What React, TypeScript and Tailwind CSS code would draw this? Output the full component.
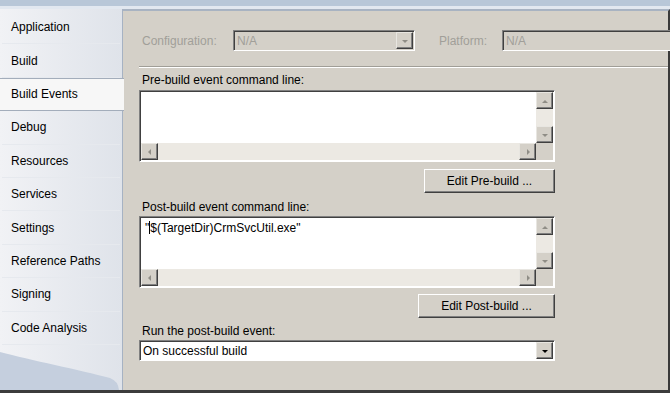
const tabs = [
  "Application",
  "Build",
  "Build Events",
  "Debug",
  "Resources",
  "Services",
  "Settings",
  "Reference Paths",
  "Signing",
  "Code Analysis",
]

function Arrow({ dir, disabled }: { dir: "up" | "down" | "left" | "right"; disabled?: boolean }) {
  const pts = {
    up: "1,6 4,3 7,6",
    down: "1,3 4,6 7,3",
    left: "5,1 2,4 5,7",
    right: "3,1 6,4 3,7",
  }[dir]
  return (
    <svg width="8" height="8" viewBox="0 0 8 8">
      <polygon points={pts} fill={disabled ? "#8f8d86" : "#000"} />
    </svg>
  )
}

function RaisedBtn({ dir, disabled, className = "" }: { dir: "up" | "down" | "left" | "right"; disabled?: boolean; className?: string }) {
  return (
    <div
      className={`flex items-center justify-center bg-[#d4d0c8] border border-t-[#e8e6e1] border-l-[#e8e6e1] border-b-[#404040] border-r-[#404040] shadow-[inset_-1px_-1px_0_#808080] ${className}`}
    >
      <Arrow dir={dir} disabled={disabled} />
    </div>
  )
}

function Sunken({ className = "", children }: { className?: string; children?: React.ReactNode }) {
  return (
    <div
      className={`border border-t-[#808080] border-l-[#808080] border-b-white border-r-white shadow-[inset_1px_1px_0_#404040] ${className}`}
    >
      {children}
    </div>
  )
}

function ScrollBox({ text }: { text?: React.ReactNode }) {
  return (
    <Sunken className="w-[416px] h-[72px] bg-white p-[1px]">
      <div className="grid h-full grid-cols-[1fr_17px] grid-rows-[1fr_17px]">
        <div className="px-[4px] pt-[3px] text-[12px] leading-[14px] text-black">{text}</div>
        <div className="flex flex-col bg-[#ece9e3]">
          <RaisedBtn dir="up" disabled className="h-[17px]" />
          <div className="flex-1" />
          <RaisedBtn dir="down" disabled className="h-[17px]" />
        </div>
        <div className="flex bg-[#ece9e3]">
          <RaisedBtn dir="left" disabled className="w-[17px]" />
          <div className="flex-1" />
          <RaisedBtn dir="right" disabled className="w-[17px]" />
        </div>
        <div className="bg-[#d4d0c8]" />
      </div>
    </Sunken>
  )
}

function PushButton({ label, className = "" }: { label: string; className?: string }) {
  return (
    <div
      className={`flex items-center justify-center h-[24px] bg-[#d4d0c8] border border-t-white border-l-white border-b-[#404040] border-r-[#404040] shadow-[inset_-1px_-1px_0_#808080] text-[12px] text-black ${className}`}
    >
      {label}
    </div>
  )
}

function Combo({ value, disabled, className = "" }: { value: string; disabled?: boolean; className?: string }) {
  return (
    <Sunken className={`h-[21px] flex items-center p-[1px] ${disabled ? "bg-[#d4d0c8]" : "bg-white"} ${className}`}>
      <div className={`flex-1 pl-[2px] text-[12px] ${disabled ? "text-[#a19f99]" : "text-black"}`}>{value}</div>
      <RaisedBtn dir="down" disabled={disabled} className="w-[17px] h-[17px]" />
    </Sunken>
  )
}

export default function App() {
  return (
    <div
      className="w-[670px] h-[393px] overflow-hidden flex flex-col bg-[#b9c8d9]"
      style={{ fontFamily: "'Liberation Sans', Arial, sans-serif" }}
    >
      <div className="h-[6px] bg-[#b8c7d8]" />
      <div className="h-[3px] bg-[#e2e8f0]" />
      <div className="flex flex-1 min-h-0">
        {/* tabs */}
        <div className="relative w-[123px] flex flex-col pt-[2px] bg-gradient-to-r from-[#f1f2f5] to-[#dfe3ea] border-r border-[#a6b2c3]">
          {tabs.map((t) => {
            const active = t === "Build Events"
            return (
              <div
                key={t}
                className={
                  active
                    ? "h-[33.4px] -mr-[2px] flex items-center pl-[11px] text-[12px] text-black bg-[#f7f7f7] border-y border-[#a3adbb] z-10"
                    : "h-[33.4px] flex items-center pl-[9px] text-[12px] text-black border-b border-[#e6e9ee] mx-[2px]"
                }
              >
                {t}
              </div>
            )
          })}
          <svg className="absolute bottom-0 left-0" width="122" height="46" viewBox="0 0 122 46">
            <path d="M0 8 C30 16 80 26 110 34 Q118 37 119 46 L0 46 Z" fill="#c5cfde" />
          </svg>
        </div>

        {/* page */}
        <div className="flex-1 bg-[#d4d0c8] border-t-2 border-[#a8b3c2] border-r-2 border-r-[#3a3a3a] pl-[16px] pt-[19px] flex flex-col">
          <div className="flex items-center h-[21px]">
            <span className="w-[94px] pl-[3px] text-[12px] text-[#a19f99]">Configuration:</span>
            <Combo value="N/A" disabled className="w-[182px]" />
            <span className="ml-[24px] w-[63px] text-[12px] text-[#a19f99]">Platform:</span>
            <Sunken className="h-[21px] flex-1 -mr-[4px] bg-[#d4d0c8] flex items-center pl-[3px] text-[12px] text-[#a19f99]">
              N/A
            </Sunken>
          </div>
          <div className="mt-[15px] h-[2px] border-t border-[#a09e97] border-b border-b-white" />
          <div className="mt-[5px] pl-[3px] text-[12px] leading-[14px] text-black">Pre-build event command line:</div>
          <div className="mt-[3px]">
            <ScrollBox />
          </div>
          <div className="mt-[7px] w-[416px] flex justify-end">
            <PushButton label="Edit Pre-build ..." className="w-[131px]" />
          </div>
          <div className="mt-[7px] pl-[3px] text-[12px] leading-[14px] text-black">Post-build event command line:</div>
          <div className="mt-[2px]">
            <ScrollBox
              text={
                <span>
                  "<span className="inline-block w-[1px] h-[13px] bg-black align-[-2px]" />$(TargetDir)CrmSvcUtil.exe"
                </span>
              }
            />
          </div>
          <div className="mt-[6px] w-[416px] flex justify-end">
            <PushButton label="Edit Post-build ..." className="w-[137px]" />
          </div>
          <div className="mt-[6px] pl-[3px] text-[12px] leading-[14px] text-black">Run the post-build event:</div>
          <div className="mt-[2px]">
            <Combo value="On successful build" className="w-[416px]" />
          </div>
        </div>
      </div>
      <div className="h-[3px] bg-[#3c3c3c]" />
    </div>
  )
}
